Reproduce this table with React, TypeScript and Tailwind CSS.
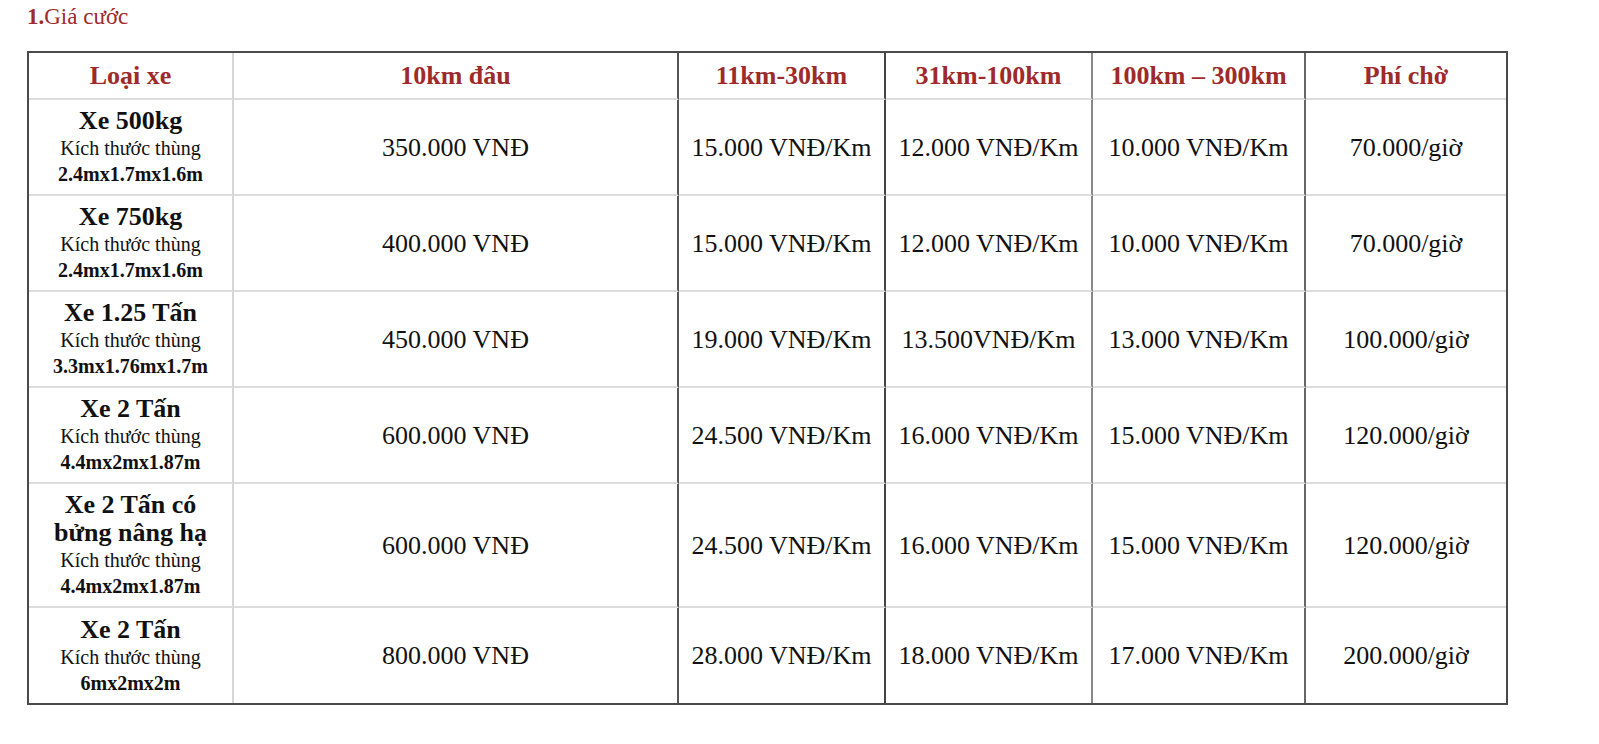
import React from "react";

const red = "text-[#9e2a2b]";

type Row = {
  name: string[];
  size: string;
  first: string;
  c3: string;
  c4: string;
  c5: string;
  wait: string;
  h: string;
};

const rows: Row[] = [
  { name: ["Xe 500kg"], size: "2.4mx1.7mx1.6m", first: "350.000 VNĐ", c3: "15.000 VNĐ/Km", c4: "12.000 VNĐ/Km", c5: "10.000 VNĐ/Km", wait: "70.000/giờ", h: "h-[96px]" },
  { name: ["Xe 750kg"], size: "2.4mx1.7mx1.6m", first: "400.000 VNĐ", c3: "15.000 VNĐ/Km", c4: "12.000 VNĐ/Km", c5: "10.000 VNĐ/Km", wait: "70.000/giờ", h: "h-[96px]" },
  { name: ["Xe 1.25 Tấn"], size: "3.3mx1.76mx1.7m", first: "450.000 VNĐ", c3: "19.000 VNĐ/Km", c4: "13.500VNĐ/Km", c5: "13.000 VNĐ/Km", wait: "100.000/giờ", h: "h-[96px]" },
  { name: ["Xe 2 Tấn"], size: "4.4mx2mx1.87m", first: "600.000 VNĐ", c3: "24.500 VNĐ/Km", c4: "16.000 VNĐ/Km", c5: "15.000 VNĐ/Km", wait: "120.000/giờ", h: "h-[96px]" },
  { name: ["Xe 2 Tấn có", "bửng nâng hạ"], size: "4.4mx2mx1.87m", first: "600.000 VNĐ", c3: "24.500 VNĐ/Km", c4: "16.000 VNĐ/Km", c5: "15.000 VNĐ/Km", wait: "120.000/giờ", h: "h-[124px]" },
  { name: ["Xe 2 Tấn"], size: "6mx2mx2m", first: "800.000 VNĐ", c3: "28.000 VNĐ/Km", c4: "18.000 VNĐ/Km", c5: "17.000 VNĐ/Km", wait: "200.000/giờ", h: "h-[95px]" },
];

export default function App() {
  const font = "font-['Liberation_Serif','Times_New_Roman',serif]";
  return (
    <div className={`${font} bg-white min-h-screen w-[1599px] pl-[27px] pt-[3px] text-[#111]`}>
      <div className={`text-[23px] leading-[28px] ${red}`}>
        <span className="font-bold">1.</span>Giá cước
      </div>
      <div className="mt-[20px] w-[1481px] border-2 border-[#4a4a4a]">
        <table className="table-fixed w-full border-separate border-spacing-0">
          <colgroup>
            <col className="w-[205px]" />
            <col className="w-[445px]" />
            <col className="w-[207px]" />
            <col className="w-[207px]" />
            <col className="w-[213px]" />
            <col />
          </colgroup>
          <thead>
            <tr className={`text-[26px] font-bold ${red}`}>
              <th className="h-[47px] border-r-2 border-b-2 border-r-[#d6d6d6] border-b-[#dcdcdc] font-bold">Loại xe</th>
              <th className="border-r-2 border-b-2 border-r-[#555] border-b-[#dcdcdc] font-bold">10km đâu</th>
              <th className="border-r-2 border-b-2 border-r-[#444] border-b-[#dcdcdc] font-bold">11km-30km</th>
              <th className="border-r-2 border-b-2 border-r-[#888] border-b-[#dcdcdc] font-bold">31km-100km</th>
              <th className="border-r-2 border-b-2 border-r-[#666] border-b-[#dcdcdc] font-bold">100km – 300km</th>
              <th className="border-b-2 border-b-[#dcdcdc] font-bold">Phí chờ</th>
            </tr>
          </thead>
          <tbody>
            {rows.map((r, i) => {
              const last = i === rows.length - 1;
              const bb = last ? "" : "border-b-2 border-b-[#dcdcdc]";
              return (
                <tr key={i} className="text-[26px] text-center align-middle">
                  <td className={`${r.h} border-r-2 border-r-[#d6d6d6] ${bb}`}>
                    {r.name.map((n, j) => (
                      <div key={j} className="font-bold leading-[28px]">{n}</div>
                    ))}
                    <div className="text-[20px] leading-[26px]">Kích thước thùng</div>
                    <div className="text-[20px] leading-[26px] font-bold">{r.size}</div>
                  </td>
                  <td className={`border-r-2 border-r-[#555] ${bb}`}>{r.first}</td>
                  <td className={`border-r-2 border-r-[#444] ${bb}`}>{r.c3}</td>
                  <td className={`border-r-2 border-r-[#888] ${bb}`}>{r.c4}</td>
                  <td className={`border-r-2 border-r-[#666] ${bb}`}>{r.c5}</td>
                  <td className={bb}>{r.wait}</td>
                </tr>
              );
            })}
          </tbody>
        </table>
      </div>
    </div>
  );
}
